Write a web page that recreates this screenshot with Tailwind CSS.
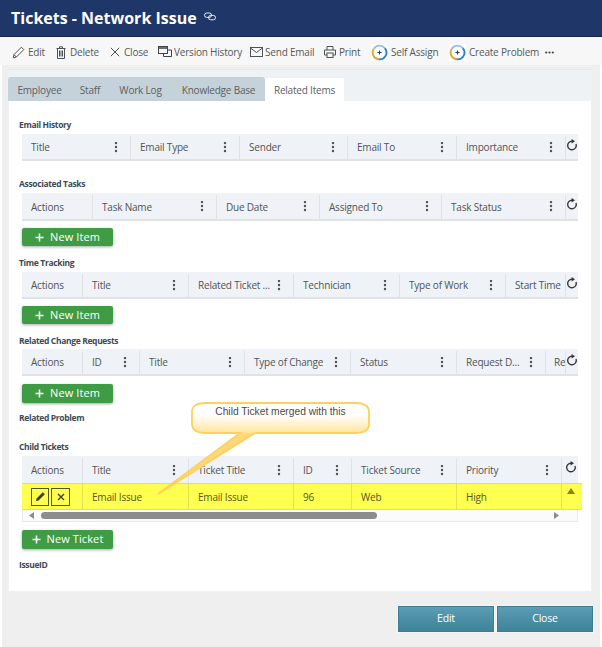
<!DOCTYPE html>
<html lang="en">
<head>
  <meta charset="utf-8" />
  <meta content="width=device-width, initial-scale=1.0" name="viewport" />
  <title>Tickets - Network Issue</title>
  <script src="https://cdn.jsdelivr.net/npm/@tailwindcss/browser@4"></script>
</head>
<body class="bg-[#efefef] font-['Open_Sans','Noto_Sans',sans-serif] text-[10px] tracking-[-0.2px] whitespace-nowrap text-[#5b6064]">
  <!-- shared icons -->
  <svg class="hidden">
    <symbol id="kebab" viewBox="0 1 4 12"><circle cx="2" cy="2" r="1.2" fill="#4d5256"/><circle cx="2" cy="6" r="1.2" fill="#4d5256"/><circle cx="2" cy="10" r="1.2" fill="#4d5256"/></symbol>
    <symbol id="refresh" viewBox="0 0 12 12"><path d="M10 5A4.3 4.3 0 1 1 6 2.2" fill="none" stroke="#33373b" stroke-width="1.4"/><path d="M5.6 0 9 2.2 5.6 4.4Z" fill="#33373b"/></symbol>
    <symbol id="assign" viewBox="0 0 18 18"><rect width="18" height="18" fill="#fff"/><path d="M14.6 4.4A7.2 7.2 0 0 0 3 5" fill="none" stroke="#8fc3e6" stroke-width="2"/><path d="M3 5A7.2 7.2 0 0 0 8 16.2" fill="none" stroke="#e5a428" stroke-width="2"/><path d="M8 16.2A7.2 7.2 0 0 0 14.6 4.4" fill="none" stroke="#2a83c6" stroke-width="2"/><path d="M9 6.8v4.4M6.8 9h4.4" stroke="#24406f" stroke-width="1.2"/></symbol>
    <symbol id="plus" viewBox="0 0 9 9"><path d="M4.5 0.5v8M0.5 4.5h8" stroke="#fff" stroke-width="1.5"/></symbol>
  </svg>

  <div class="w-[602px] h-[647px] flex flex-col overflow-hidden relative shadow-[inset_2px_0_0_#fff,inset_-2px_0_0_#fff]">
    <!-- Title bar -->
    <header class="h-[37px] shrink-0 bg-[#1f3669] border-b border-[#152650] flex items-center pl-[11px] gap-[7px] text-white tracking-normal">
      <h1 class="text-[16px] font-bold leading-none">Tickets - Network Issue</h1>
      <svg class="w-[12px] h-[9px] mt-[-4px]" viewBox="0 0 12 9" fill="none" stroke="#e8ecf4" stroke-width="1"><rect x="0.5" y="1" width="7" height="4.4" rx="2.2"/><rect x="4.5" y="3.4" width="7" height="4.4" rx="2.2"/></svg>
    </header>

    <!-- Toolbar -->
    <div class="h-[28px] shrink-0 bg-[#f7f7f7] flex items-center pl-[12px] pt-[2px] text-[#54595d]">
      <div class="flex items-center w-[44px] gap-[3px]">
        <svg class="w-[13px] h-[13px]" viewBox="0 0 13 13" fill="none" stroke="#4d5256"><path d="M1.2 11.8 2 8.6 9.4 1.2 11.8 3.6 4.4 11Z"/><path d="M2 8.6 4.4 11"/></svg>
        <span>Edit</span>
      </div>
      <div class="flex items-center w-[54px] gap-[4px]">
        <svg class="w-[10px] h-[13px]" viewBox="0 0 10 13" fill="none" stroke="#4d5256"><path d="M0.5 2.5h9M3.5 2.5V0.8h3v1.7M1.5 2.5v10h7v-10M3.5 4.5v6M5 4.5v6M6.5 4.5v6"/></svg>
        <span>Delete</span>
      </div>
      <div class="flex items-center w-[48px] gap-[4px]">
        <svg class="w-[10px] h-[10px]" viewBox="0 0 10 10" fill="none" stroke="#4d5256"><path d="M0.8 0.8 9.2 9.2M9.2 0.8 0.8 9.2"/></svg>
        <span>Close</span>
      </div>
      <div class="flex items-center w-[92px] gap-[2px]">
        <svg class="w-[14px] h-[12px]" viewBox="0 0 14 12" fill="none" stroke="#3f4347"><rect x="0.5" y="0.5" width="9" height="7"/><path d="M0.5 2h9" stroke-width="1.5"/><path d="M10 4h3.5v6.5h-8V8"/></svg>
        <span>Version History</span>
      </div>
      <div class="flex items-center w-[74px] gap-[2px]">
        <svg class="w-[13px] h-[10px]" viewBox="0 0 13 10" fill="none" stroke="#4d5256"><rect x="0.5" y="0.5" width="12" height="9"/><path d="M0.5 1 6.5 5.5 12.5 1"/></svg>
        <span>Send Email</span>
      </div>
      <div class="flex items-center w-[47px] gap-[3px]">
        <svg class="w-[12px] h-[12px]" viewBox="0 0 12 12" fill="none" stroke="#4d5256"><path d="M3 4V0.5h6V4M3 9H0.5V4h11v5H9"/><rect x="3" y="7" width="6" height="4.5"/></svg>
        <span>Print</span>
      </div>
      <div class="flex items-center w-[78px] gap-[3px]">
        <svg class="w-[17px] h-[17px]"><use href="#assign"/></svg>
        <span>Self Assign</span>
      </div>
      <div class="flex items-center w-[96px] gap-[3px]">
        <svg class="w-[17px] h-[17px]"><use href="#assign"/></svg>
        <span>Create Problem</span>
      </div>
      <svg class="w-[9px] h-[3px]" viewBox="0 0 9 3"><circle cx="1.2" cy="1.5" r="1.1" fill="#3f4347"/><circle cx="4.5" cy="1.5" r="1.1" fill="#3f4347"/><circle cx="7.8" cy="1.5" r="1.1" fill="#3f4347"/></svg>
    </div>

    <!-- Main panel -->
    <main class="mt-[4px] ml-[8px] w-[584px] h-[522px] shrink-0 border-t border-[#e4e6e8] bg-[#eef2f5] flex flex-col">
      <!-- Tabs -->
      <nav class="mt-[7px] h-[24px] flex shrink-0">
        <div class="w-[63px] pt-[2px] bg-[#c5d2da] rounded-tl-[3px] flex items-center justify-center">Employee</div>
        <div class="w-[38px] pt-[2px] bg-[#c5d2da] flex items-center justify-center">Staff</div>
        <div class="w-[63px] pt-[2px] bg-[#c5d2da] flex items-center justify-center">Work Log</div>
        <div class="w-[93px] pt-[2px] bg-[#c5d2da] rounded-tr-[3px] flex items-center justify-center">Knowledge Base</div>
        <div class="w-[79px] pt-[2px] bg-white mt-px flex items-center justify-center">Related Items</div>
      </nav>

      <!-- Tab content -->
      <div class="flex-1 bg-white ml-px mr-px pl-[10px] pt-[17px] text-[#4f5458]">
        <!-- Email History -->
        <h2 class="h-[14px] leading-[14px] mb-[2px] text-[8.5px] tracking-[-0.35px] font-bold text-[#3d4a58]">Email History</h2>
        <div class="ml-[3px] w-[556px] h-[27px] pt-[2px] flex bg-[#eff2f6] border-b-2 border-[#dfe3e6]">
          <div class="w-[109px] pl-[9px] pr-[12px] flex items-center justify-between border-r border-[#dfe3e6]"><span>Title</span><svg class="w-[4px] h-[12px]"><use href="#kebab"/></svg></div>
          <div class="w-[109px] pl-[9px] pr-[12px] flex items-center justify-between border-r border-[#dfe3e6]"><span>Email Type</span><svg class="w-[4px] h-[12px]"><use href="#kebab"/></svg></div>
          <div class="w-[108px] pl-[9px] pr-[12px] flex items-center justify-between border-r border-[#dfe3e6]"><span>Sender</span><svg class="w-[4px] h-[12px]"><use href="#kebab"/></svg></div>
          <div class="w-[109px] pl-[9px] pr-[12px] flex items-center justify-between border-r border-[#dfe3e6]"><span>Email To</span><svg class="w-[4px] h-[12px]"><use href="#kebab"/></svg></div>
          <div class="w-[109px] pl-[9px] pr-[12px] flex items-center justify-between border-r border-[#dfe3e6]"><span>Importance</span><svg class="w-[4px] h-[12px]"><use href="#kebab"/></svg></div>
          <div class="w-[12px] pt-[3px]"><svg class="w-[12px] h-[12px]"><use href="#refresh"/></svg></div>
        </div>

        <!-- Associated Tasks -->
        <h2 class="mt-[16px] h-[14px] leading-[14px] mb-[2px] text-[8.5px] tracking-[-0.35px] font-bold text-[#3d4a58]">Associated Tasks</h2>
        <div class="ml-[3px] w-[556px] h-[28px] pt-[2px] flex bg-[#eff2f6] border-b-2 border-[#dfe3e6]">
          <div class="w-[71px] pl-[9px] flex items-center border-r border-[#dfe3e6]">Actions</div>
          <div class="w-[124px] pl-[9px] pr-[12px] flex items-center justify-between border-r border-[#dfe3e6]"><span>Task Name</span><svg class="w-[4px] h-[12px]"><use href="#kebab"/></svg></div>
          <div class="w-[103px] pl-[9px] pr-[12px] flex items-center justify-between border-r border-[#dfe3e6]"><span>Due Date</span><svg class="w-[4px] h-[12px]"><use href="#kebab"/></svg></div>
          <div class="w-[122px] pl-[9px] pr-[12px] flex items-center justify-between border-r border-[#dfe3e6]"><span>Assigned To</span><svg class="w-[4px] h-[12px]"><use href="#kebab"/></svg></div>
          <div class="w-[124px] pl-[9px] pr-[12px] flex items-center justify-between border-r border-[#dfe3e6]"><span>Task Status</span><svg class="w-[4px] h-[12px]"><use href="#kebab"/></svg></div>
          <div class="w-[12px] pt-[3px]"><svg class="w-[12px] h-[12px]"><use href="#refresh"/></svg></div>
        </div>
        <button class="ml-[3px] mt-[7px] w-[91px] h-[18px] bg-[#3f9c45] rounded-[2px] shadow-[0_1px_3px_rgba(0,0,0,0.35)] flex items-center justify-center gap-[6px] text-white text-[11px] tracking-[0.1px]"><svg class="w-[9px] h-[9px]"><use href="#plus"/></svg>New Item</button>

        <!-- Time Tracking -->
        <h2 class="mt-[10px] h-[14px] leading-[14px] mb-[2px] text-[8.5px] tracking-[-0.35px] font-bold text-[#3d4a58]">Time Tracking</h2>
        <div class="ml-[3px] w-[556px] h-[27px] pt-[2px] flex bg-[#eff2f6] border-b-2 border-[#dfe3e6]">
          <div class="w-[61px] pl-[9px] flex items-center border-r border-[#dfe3e6]">Actions</div>
          <div class="w-[106px] pl-[9px] pr-[12px] flex items-center justify-between border-r border-[#dfe3e6]"><span>Title</span><svg class="w-[4px] h-[12px]"><use href="#kebab"/></svg></div>
          <div class="w-[105px] pl-[9px] pr-[12px] flex items-center justify-between border-r border-[#dfe3e6]"><span>Related Ticket ...</span><svg class="w-[4px] h-[12px]"><use href="#kebab"/></svg></div>
          <div class="w-[106px] pl-[9px] pr-[12px] flex items-center justify-between border-r border-[#dfe3e6]"><span>Technician</span><svg class="w-[4px] h-[12px]"><use href="#kebab"/></svg></div>
          <div class="w-[106px] pl-[9px] pr-[12px] flex items-center justify-between border-r border-[#dfe3e6]"><span>Type of Work</span><svg class="w-[4px] h-[12px]"><use href="#kebab"/></svg></div>
          <div class="w-[60px] pl-[9px] flex items-center border-r border-[#dfe3e6] overflow-hidden">Start Time</div>
          <div class="w-[12px] pt-[3px]"><svg class="w-[12px] h-[12px]"><use href="#refresh"/></svg></div>
        </div>
        <button class="ml-[3px] mt-[7px] w-[91px] h-[18px] bg-[#3f9c45] rounded-[2px] shadow-[0_1px_3px_rgba(0,0,0,0.35)] flex items-center justify-center gap-[6px] text-white text-[11px] tracking-[0.1px]"><svg class="w-[9px] h-[9px]"><use href="#plus"/></svg>New Item</button>

        <!-- Related Change Requests -->
        <h2 class="mt-[10px] h-[14px] leading-[14px] mb-[1px] text-[8.5px] tracking-[-0.35px] font-bold text-[#3d4a58]">Related Change Requests</h2>
        <div class="ml-[3px] w-[556px] h-[27px] pt-[2px] flex bg-[#eff2f6] border-b-2 border-[#dfe3e6]">
          <div class="w-[61px] pl-[9px] flex items-center border-r border-[#dfe3e6]">Actions</div>
          <div class="w-[57px] pl-[9px] pr-[12px] flex items-center justify-between border-r border-[#dfe3e6]"><span>ID</span><svg class="w-[4px] h-[12px]"><use href="#kebab"/></svg></div>
          <div class="w-[105px] pl-[9px] pr-[12px] flex items-center justify-between border-r border-[#dfe3e6]"><span>Title</span><svg class="w-[4px] h-[12px]"><use href="#kebab"/></svg></div>
          <div class="w-[106px] pl-[9px] pr-[12px] flex items-center justify-between border-r border-[#dfe3e6]"><span>Type of Change</span><svg class="w-[4px] h-[12px]"><use href="#kebab"/></svg></div>
          <div class="w-[106px] pl-[9px] pr-[12px] flex items-center justify-between border-r border-[#dfe3e6]"><span>Status</span><svg class="w-[4px] h-[12px]"><use href="#kebab"/></svg></div>
          <div class="w-[89px] pl-[9px] pr-[12px] flex items-center justify-between border-r border-[#dfe3e6]"><span>Request D...</span><svg class="w-[4px] h-[12px]"><use href="#kebab"/></svg></div>
          <div class="w-[20px] pl-[8px] flex items-center border-r border-[#dfe3e6] overflow-hidden">Re</div>
          <div class="w-[12px] pt-[3px]"><svg class="w-[12px] h-[12px]"><use href="#refresh"/></svg></div>
        </div>
        <button class="ml-[3px] mt-[8px] w-[91px] h-[19px] bg-[#3f9c45] rounded-[2px] shadow-[0_1px_3px_rgba(0,0,0,0.35)] flex items-center justify-center gap-[6px] text-white text-[11px] tracking-[0.1px]"><svg class="w-[9px] h-[9px]"><use href="#plus"/></svg>New Item</button>

        <!-- Related Problem -->
        <h2 class="mt-[8px] h-[14px] leading-[14px] text-[8.5px] tracking-[-0.35px] font-bold text-[#3d4a58]">Related Problem</h2>

        <!-- Child Tickets -->
        <h2 class="mt-[15px] h-[14px] leading-[14px] mb-[2px] text-[8.5px] tracking-[-0.35px] font-bold text-[#3d4a58]">Child Tickets</h2>
        <div class="ml-[3px] w-[556px] h-[27px] pt-[2px] flex bg-[#eff2f6]">
          <div class="w-[61px] pl-[9px] flex items-center border-r border-[#dfe3e6]">Actions</div>
          <div class="w-[106px] pl-[9px] pr-[12px] flex items-center justify-between border-r border-[#dfe3e6]"><span>Title</span><svg class="w-[4px] h-[12px]"><use href="#kebab"/></svg></div>
          <div class="w-[105px] pl-[9px] pr-[12px] flex items-center justify-between border-r border-[#dfe3e6]"><span>Ticket Title</span><svg class="w-[4px] h-[12px]"><use href="#kebab"/></svg></div>
          <div class="w-[58px] pl-[9px] pr-[12px] flex items-center justify-between border-r border-[#dfe3e6]"><span>ID</span><svg class="w-[4px] h-[12px]"><use href="#kebab"/></svg></div>
          <div class="w-[105px] pl-[9px] pr-[12px] flex items-center justify-between border-r border-[#dfe3e6]"><span>Ticket Source</span><svg class="w-[4px] h-[12px]"><use href="#kebab"/></svg></div>
          <div class="w-[105px] pl-[9px] pr-[12px] flex items-center justify-between border-r border-[#dfe3e6]"><span>Priority</span><svg class="w-[4px] h-[12px]"><use href="#kebab"/></svg></div>
          <div class="w-[16px] pl-[3px] pt-[3px]"><svg class="w-[12px] h-[12px]"><use href="#refresh"/></svg></div>
        </div>
        <!-- highlighted row -->
        <div class="ml-[3px] w-[560px] h-[27px] flex bg-[#ffff4f] border-y border-[#e3e34c] text-[#55561f]">
          <div class="w-[61px] pl-[9px] flex items-center gap-[2px] border-r border-[#e3e34c]">
            <button class="w-[18px] h-[18px] border border-[#55552a] flex items-center justify-center"><svg class="w-[11px] h-[11px]" viewBox="0 0 11 11"><path d="M1 10 1.6 7.4 7.8 1.2 9.8 3.2 3.6 9.4Z" fill="#3f3f1a"/></svg></button>
            <button class="w-[19px] h-[18px] border border-[#55552a] flex items-center justify-center"><svg class="w-[8px] h-[8px]" viewBox="0 0 8 8"><path d="M1 1 7 7M7 1 1 7" stroke="#3f3f1a" stroke-width="1.4"/></svg></button>
          </div>
          <div class="w-[106px] pl-[9px] pt-px flex items-center border-r border-[#e3e34c]">Email Issue</div>
          <div class="w-[105px] pl-[9px] pt-px flex items-center border-r border-[#e3e34c]">Email Issue</div>
          <div class="w-[58px] pl-[9px] pt-px flex items-center border-r border-[#e3e34c]">96</div>
          <div class="w-[105px] pl-[9px] pt-px flex items-center border-r border-[#e3e34c]">Web</div>
          <div class="w-[105px] pl-[9px] pt-px flex items-center border-r border-[#e3e34c]">High</div>
          <div class="pl-[5px] pt-[4px]"><svg class="w-[8px] h-[6px]" viewBox="0 0 8 6"><path d="M4 0 8 6H0Z" fill="#85860f"/></svg></div>
        </div>
        <!-- scrollbar -->
        <div class="ml-[3px] w-[556px] h-[12px] bg-[#fbfbfb] border-b border-[#e8e8e8] border-x flex items-center pl-[6px] pr-[18px]">
          <svg class="w-[5px] h-[7px] shrink-0" viewBox="0 0 5 7"><path d="M5 0V7L0 3.5Z" fill="#8c8c8c"/></svg>
          <div class="ml-[7px] w-[336px] h-[7px] rounded-full bg-[#8c8c8c]"></div>
          <svg class="ml-auto w-[5px] h-[7px] shrink-0" viewBox="0 0 5 7"><path d="M0 0V7L5 3.5Z" fill="#8c8c8c"/></svg>
        </div>
        <button class="ml-[3px] mt-[8px] w-[91px] h-[19px] bg-[#3f9c45] rounded-[2px] shadow-[0_1px_3px_rgba(0,0,0,0.35)] flex items-center justify-center gap-[6px] text-white text-[11px] tracking-[0.1px]"><svg class="w-[9px] h-[9px]"><use href="#plus"/></svg>New Ticket</button>

        <!-- IssueID -->
        <h2 class="mt-[9px] h-[14px] leading-[14px] text-[8.5px] tracking-[-0.35px] font-bold text-[#3d4a58]">IssueID</h2>
      </div>
    </main>

    <!-- Footer buttons -->
    <footer class="mt-[15px] ml-[398px] flex gap-[3px] text-white text-[10.5px]">
      <button class="w-[96px] h-[26px] bg-linear-to-b from-[#5a9db5] to-[#3e8397] border border-[#3a7d92] outline outline-[#f7f7f7]">Edit</button>
      <button class="w-[96px] h-[26px] bg-linear-to-b from-[#5a9db5] to-[#3e8397] border border-[#3a7d92] outline outline-[#f7f7f7]">Close</button>
    </footer>

    <!-- Annotation callout drawn over the screenshot -->
    <div class="absolute left-[150px] top-[400px] w-[224px] h-[100px]">
      <svg class="absolute inset-0 w-full h-full" viewBox="0 0 224 100">
        <defs><linearGradient id="callout" gradientUnits="userSpaceOnUse" x1="0" y1="3" x2="0" y2="94"><stop offset="0" stop-color="#fff"/><stop offset="0.13" stop-color="#fff"/><stop offset="0.32" stop-color="#ffe6a0"/><stop offset="0.34" stop-color="#fdd77b"/><stop offset="1" stop-color="#fdd77b"/></linearGradient></defs>
        <path d="M56 3H205Q219 3 219 12V24Q219 33 205 33H105L8 94L90 33H56Q42 33 42 24V12Q42 3 56 3Z" fill="url(#callout)" stroke="#fcd15f" stroke-width="1.8"/>
      </svg>
      <div class="absolute left-[42px] top-[5px] w-[177px] pt-px text-center font-['Liberation_Sans',sans-serif] text-[10.25px] tracking-normal leading-[12px] text-[#4a4a4a]">Child Ticket merged with this</div>
    </div>
  </div>
</body>
</html>
